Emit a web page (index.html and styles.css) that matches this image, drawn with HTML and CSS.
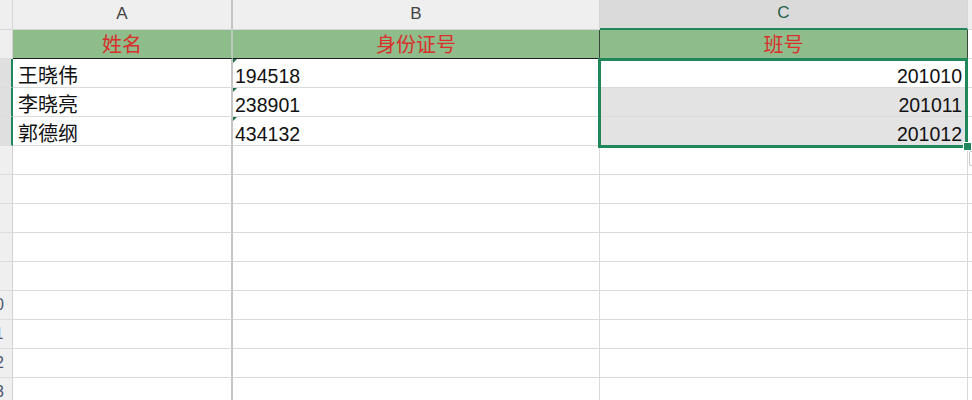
FILE: index.html
```html
<!DOCTYPE html>
<html lang="zh">
<head>
<meta charset="utf-8">
<title>Sheet</title>
<link rel="stylesheet" href="styles.css">
</head>
<body>
<div class="sheet">
  <div class="grid">
    <!-- column headers -->
    <div class="corner"></div>
    <div class="ch colA">A</div>
    <div class="ch colB">B</div>
    <div class="ch colC sel">C</div>
    <div class="ch colD"></div>

    <!-- row 1 -->
    <div class="rh"><span>1</span></div>
    <div class="cell colA title bb">姓名</div>
    <div class="cell colB title bb br-dark">身份证号</div>
    <div class="cell colC title br-dark">班号</div>
    <div class="cell colD"></div>

    <!-- row 2 -->
    <div class="rh sel"><span>2</span></div>
    <div class="cell colA zh">王晓伟</div>
    <div class="cell colB num txt">194518</div>
    <div class="cell colC num right">201010</div>
    <div class="cell colD"></div>

    <!-- row 3 -->
    <div class="rh sel"><span>3</span></div>
    <div class="cell colA zh">李晓亮</div>
    <div class="cell colB num txt">238901</div>
    <div class="cell colC num right tint">201011</div>
    <div class="cell colD"></div>

    <!-- row 4 -->
    <div class="rh sel"><span>4</span></div>
    <div class="cell colA zh">郭德纲</div>
    <div class="cell colB num txt">434132</div>
    <div class="cell colC num right tint">201012</div>
    <div class="cell colD"></div>

    <div class="rh"><span>5</span></div><div class="cell colA"></div><div class="cell colB"></div><div class="cell colC"></div><div class="cell colD"></div>
    <div class="rh"><span>6</span></div><div class="cell colA"></div><div class="cell colB"></div><div class="cell colC"></div><div class="cell colD"></div>
    <div class="rh"><span>7</span></div><div class="cell colA"></div><div class="cell colB"></div><div class="cell colC"></div><div class="cell colD"></div>
    <div class="rh"><span>8</span></div><div class="cell colA"></div><div class="cell colB"></div><div class="cell colC"></div><div class="cell colD"></div>
    <div class="rh"><span>9</span></div><div class="cell colA"></div><div class="cell colB"></div><div class="cell colC"></div><div class="cell colD"></div>
    <div class="rh"><span>10</span></div><div class="cell colA"></div><div class="cell colB"></div><div class="cell colC"></div><div class="cell colD"></div>
    <div class="rh"><span>11</span></div><div class="cell colA"></div><div class="cell colB"></div><div class="cell colC"></div><div class="cell colD"></div>
    <div class="rh"><span>12</span></div><div class="cell colA"></div><div class="cell colB"></div><div class="cell colC"></div><div class="cell colD"></div>
    <div class="rh"><span>13</span></div><div class="cell colA"></div><div class="cell colB"></div><div class="cell colC"></div><div class="cell colD"></div>
  </div>

  <div class="selection"></div>
  <div class="fill-handle"></div>
  <div class="quick-analysis"></div>
</div>
</body>
</html>
```

FILE: styles.css
```css
* {
  box-sizing: border-box;
}

html, body {
  margin: 0;
  padding: 0;
  background: #ffffff;
  overflow: hidden;
}

.sheet {
  position: relative;
  width: 972px;
  height: 400px;
  overflow: hidden;
  font-family: "Liberation Sans", Arial, sans-serif;
}

.grid {
  display: grid;
  grid-template-columns: 13px 220px 367px 368px 1fr;
  grid-template-rows: 30px;
  grid-auto-rows: 29px;
}

.corner {
  background: #efefef;
  border-right: 1px solid #d6d6d6;
  border-bottom: 1px solid #d6d6d6;
}

.ch {
  background: #efefef;
  color: #444444;
  font-size: 17px;
  display: flex;
  align-items: center;
  justify-content: center;
  border-right: 1px solid #d6d6d6;
  border-bottom: 1px solid #d6d6d6;
  padding-bottom: 2px;
}

.ch.sel {
  background: #dadada;
  color: #285f49;
  border-bottom: 2px solid #1f875a;
}

.rh {
  background: #efefef;
  border-right: 1px solid #d3d3d3;
  border-bottom: 1px solid #dcdcdc;
  overflow: hidden;
  display: flex;
  align-items: center;
}

.rh span {
  flex: none;
  width: 36px;
  margin-left: -23px;
  text-align: center;
  font-size: 16px;
  color: #4b566e;
}

.rh.sel {
  background: #dfdfdf;
  border-right: 2px solid #1f875a;
}

.cell {
  position: relative;
  border-right: 1px solid #dadada;
  border-bottom: 1px solid #dadada;
  overflow: hidden;
  white-space: nowrap;
  display: flex;
  align-items: flex-end;
  padding: 0 4px 2px 4px;
  color: #111111;
}

.colA {
  border-right: 2px solid #c5c5c5;
}

.ch.colA {
  border-right: 2px solid #c5c5c5;
}

.title {
  background: #8fbc8b;
  color: #d8302a;
  font-family: "Noto Sans CJK SC", sans-serif;
  font-size: 20px;
  line-height: 1;
  justify-content: center;
  align-items: center;
  padding: 0 0 1px 0;
}

.title.bb {
  border-bottom: 1px solid #202020;
}

.title.colA {
  border-right: 2px solid #b9c9b7;
}

.title.br-dark {
  border-right: 1px solid #3a4a3a;
}

.zh {
  font-family: "Noto Sans CJK SC", sans-serif;
  font-size: 20px;
  line-height: 20px;
  padding-left: 5px;
}

.num {
  font-family: "Liberation Sans", Arial, sans-serif;
  font-size: 19.5px;
  line-height: 20px;
  padding-left: 2px;
  padding-bottom: 1px;
}

.num.right {
  justify-content: flex-end;
  padding-right: 5px;
}

.tint {
  background: #e3e3e3;
}

.txt::before {
  content: "";
  position: absolute;
  top: 0;
  left: 0;
  border-top: 4px solid #1e7145;
  border-right: 4px solid transparent;
}

.selection {
  position: absolute;
  left: 598px;
  top: 58px;
  width: 370px;
  height: 90px;
  border: 3px solid #1f875a;
  pointer-events: none;
}

.fill-handle {
  position: absolute;
  left: 964px;
  top: 143px;
  width: 7px;
  height: 7px;
  background: #1f875a;
  outline: 1px solid #ffffff;
}

.quick-analysis {
  position: absolute;
  left: 969px;
  top: 151px;
  width: 12px;
  height: 15px;
  border: 1px solid #c9c9c9;
  border-radius: 2px;
  background: #ffffff;
}
```
